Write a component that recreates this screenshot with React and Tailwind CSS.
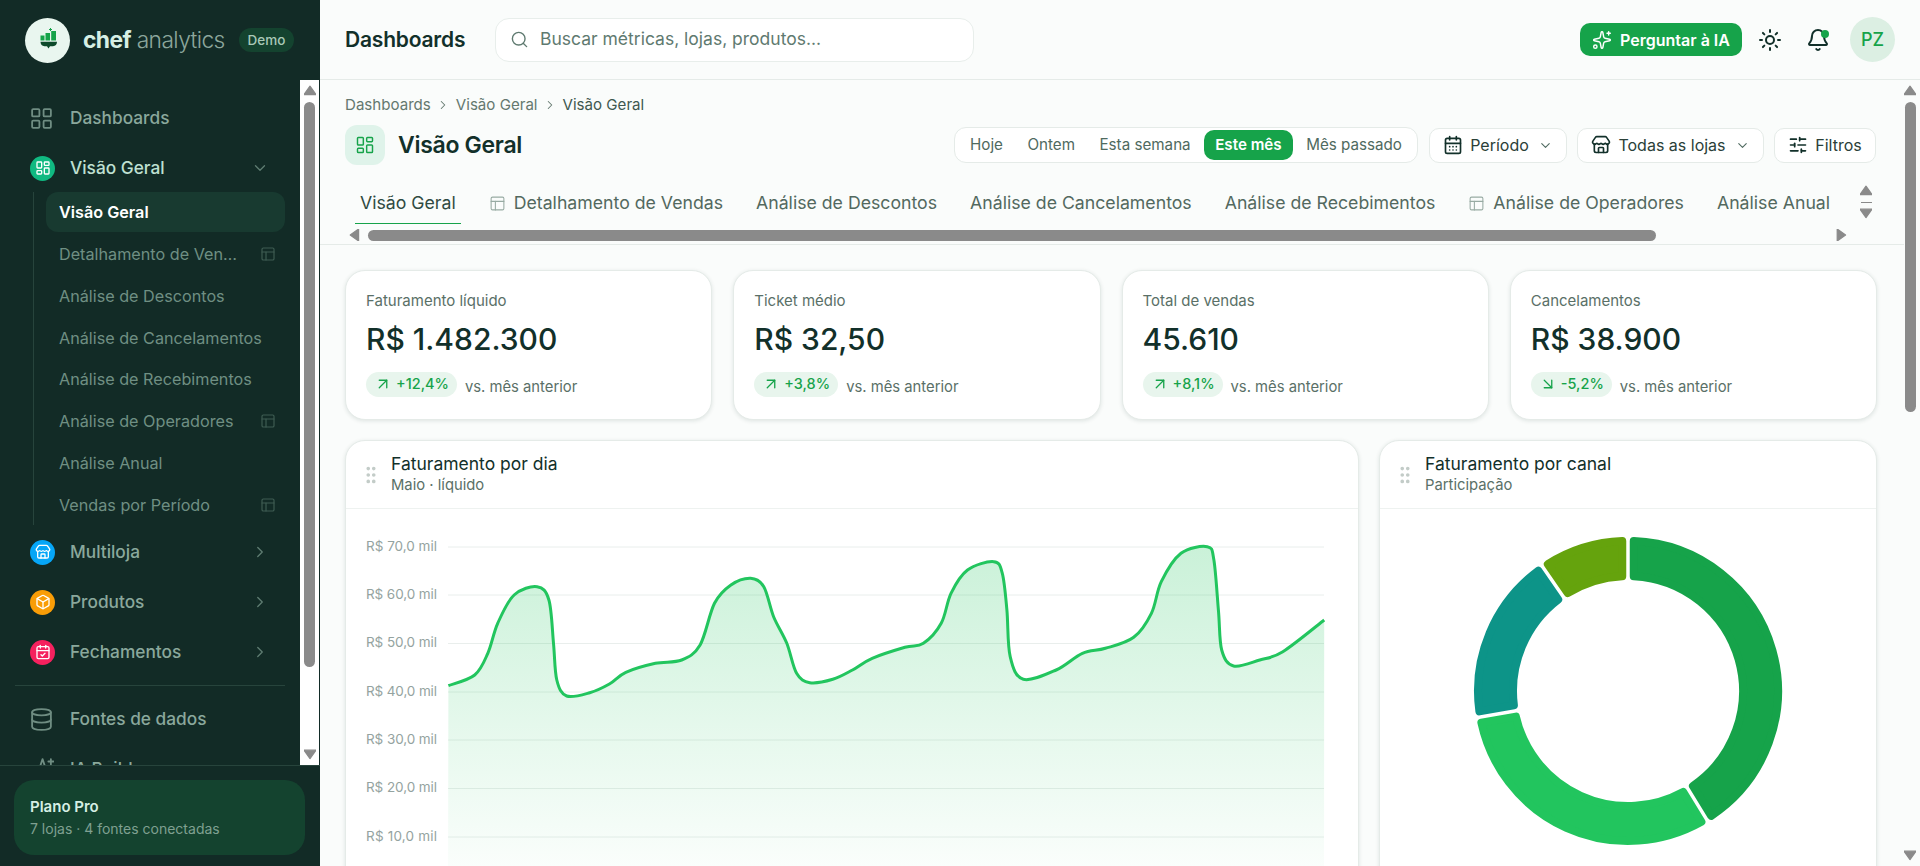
import {
  ArrowDownRight,
  ArrowUpRight,
  Bell,
  Box,
  CalendarCheck,
  CalendarDays,
  ChevronDown,
  ChevronRight,
  Database,
  GripVertical,
  LayoutDashboard,
  LayoutGrid,
  PanelsTopLeft,
  Search,
  SlidersHorizontal,
  Sparkles,
  Store,
  Sun,
} from 'lucide-react';

const subItems = [
  { label: 'Visão Geral', active: true },
  { label: 'Detalhamento de Vendas', table: true },
  { label: 'Análise de Descontos' },
  { label: 'Análise de Cancelamentos' },
  { label: 'Análise de Recebimentos' },
  { label: 'Análise de Operadores', table: true },
  { label: 'Análise Anual' },
  { label: 'Vendas por Período', table: true },
];

const groups = [
  { label: 'Multiloja', icon: Store, color: 'bg-[#06a6f7]' },
  { label: 'Produtos', icon: Box, color: 'bg-[#f99d07]' },
  { label: 'Fechamentos', icon: CalendarCheck, color: 'bg-[#f5215e]' },
];

const presets = ['Hoje', 'Ontem', 'Esta semana', 'Este mês', 'Mês passado'];

const tabs = [
  { label: 'Visão Geral', active: true },
  { label: 'Detalhamento de Vendas', table: true },
  { label: 'Análise de Descontos' },
  { label: 'Análise de Cancelamentos' },
  { label: 'Análise de Recebimentos' },
  { label: 'Análise de Operadores', table: true },
  { label: 'Análise Anual' },
];

const kpis = [
  { label: 'Faturamento líquido', value: 'R$ 1.482.300', delta: '+12,4%' },
  { label: 'Ticket médio', value: 'R$ 32,50', delta: '+3,8%' },
  { label: 'Total de vendas', value: '45.610', delta: '+8,1%' },
  { label: 'Cancelamentos', value: 'R$ 38.900', delta: '-5,2%', down: true },
];

const Arrow = ({ dir, className = '' }) => {
  const points = {
    up: '0,8 5,1 10,8',
    down: '0,1 10,1 5,8',
    left: '8,0 8,10 1,5',
    right: '1,0 1,10 8,5',
  };
  return (
    <svg viewBox="0 0 10 10" className={`w-[12px] h-[12px] shrink-0 ${className}`} fill="#8a8a8a" stroke="#8a8a8a" strokeWidth="1" strokeLinejoin="round">
      <polygon points={points[dir]} />
    </svg>
  );
};

const VScroll = ({ className = '', thumb }) => (
  <div className={`flex flex-col items-center shrink-0 ${className}`}>
    <div className="h-[22px] flex items-center justify-center"><Arrow dir="up" /></div>
    <div className={`w-[11px] rounded-full bg-[#8a8a8a] ${thumb}`} />
    <div className="flex-1" />
    <div className="h-[20px] flex items-center justify-center"><Arrow dir="down" /></div>
  </div>
);

const Logo = () => (
  <svg viewBox="0 0 24 24" className="w-[24px] h-[24px]">
    <rect x="4.500" y="7.500" width="4" height="5" fill="#16a34a" />
    <rect x="9.500" y="5" width="4.500" height="7.500" fill="#16a34a" />
    <rect x="15.200" y="3" width="4.800" height="9.500" fill="#16a34a" />
    <path d="M14.500 0v3M13 1.500h3" stroke="#16a34a" strokeWidth="1" />
    <path d="M4.500 13.800h16.500c0 2.500-1.500 4.400-4 4.400h-3l-1.500 2.300-1.500-2.300h-2.500c-2.500 0-4-1.900-4-4.400z" fill="#0e4a2b" />
  </svg>
);

const Sidebar = () => (
  <aside className="w-[320px] h-full shrink-0 flex flex-col bg-[#122b26]">
    <div className="h-[80px] shrink-0 flex items-center pl-[25px]">
      <div className="w-[45px] h-[45px] rounded-full bg-[#e9f6ef] flex items-center justify-center">
        <Logo />
      </div>
      <div className="ml-[13px] w-[143px] whitespace-nowrap text-[22.800px] tracking-[-0.6px]">
        <span className="font-bold text-[#d6efe4]">chef</span>
        <span className="font-light text-[#8ca69c]"> analytics</span>
      </div>
      <span className="ml-[13px] h-[24px] w-[55px] rounded-full bg-[#14432f] text-[#a9c9b8] text-[13.500px] font-medium flex items-center justify-center">Demo</span>
    </div>
    <div className="h-[685px] flex overflow-hidden">
      <nav className="w-[300px] shrink-0 overflow-hidden px-[15px] pt-[18px]">
        <div className="h-[40px] flex items-center gap-[16px] pl-[14px] text-[#8aa89c]">
          <LayoutGrid className="w-[25px] h-[25px] text-[#6f8d82]" strokeWidth={1.75} />
          <span className="text-[17.300px] font-medium">Dashboards</span>
        </div>
        <div className="h-[40px] mt-[10px] flex items-center pl-[15px] pr-[16px]">
          <span className="w-[25px] h-[25px] rounded-full bg-[#10b981] flex items-center justify-center">
            <LayoutDashboard className="w-[16px] h-[16px] text-white" strokeWidth={2} />
          </span>
          <span className="ml-[15px] flex-1 text-[17.300px] font-medium text-[#bfe0d2]">Visão Geral</span>
          <ChevronDown className="w-[18px] h-[18px] text-[#5f7d72]" strokeWidth={1.75} />
        </div>
        <ul className="ml-[18px] mt-[4px] border-l border-[#27443c] pl-[12px] flex flex-col gap-[1.900px]">
          {subItems.map((item) => (
            <li
              key={item.label}
              className={`h-[40px] rounded-[12px] flex items-center pl-[13px] pr-[9px] text-[16.200px] ${item.active ? 'bg-[#183a30] text-white font-semibold' : 'text-[#6f8f83]'}`}
            >
              <span className="flex-1 truncate">{item.label}</span>
              {item.table && <PanelsTopLeft className="w-[16px] h-[16px] ml-[15px] shrink-0 text-[#3f5d53]" strokeWidth={1.75} />}
            </li>
          ))}
        </ul>
        <div className="mt-[7px] flex flex-col gap-[10px]">
          {groups.map(({ label, icon: Icon, color }) => (
            <div key={label} className="h-[40px] flex items-center pl-[15px] pr-[16px]">
              <span className={`w-[25px] h-[25px] rounded-full flex items-center justify-center ${color}`}>
                <Icon className="w-[16px] h-[16px] text-white" strokeWidth={2} />
              </span>
              <span className="ml-[15px] flex-1 text-[17.300px] font-medium text-[#8aa89c]">{label}</span>
              <ChevronRight className="w-[18px] h-[18px] text-[#5f7d72]" strokeWidth={1.75} />
            </div>
          ))}
        </div>
        <div className="mt-[13px] border-t border-[#27443c]" />
        <div className="mt-[13px] h-[40px] flex items-center gap-[16px] pl-[14px] text-[#8aa89c]">
          <Database className="w-[25px] h-[25px] text-[#6f8d82]" strokeWidth={1.75} />
          <span className="text-[17.300px] font-medium">Fontes de dados</span>
        </div>
        <div className="mt-[10px] h-[40px] flex items-center gap-[16px] pl-[14px] text-[#8aa89c]">
          <svg viewBox="0 0 24 24" className="w-[25px] h-[25px] text-[#6f8d82]" fill="none" stroke="currentColor" strokeWidth="1.75" strokeLinecap="round" strokeLinejoin="round">
            <path d="M7 20 13 2l6 18M9 15h8M21 2v5M18.600 4.300h5" />
          </svg>
          <span className="text-[17.300px] font-medium">IA Builder</span>
        </div>
      </nav>
      <VScroll className="w-[19px] bg-white" thumb="h-[565px]" />
    </div>
    <div className="flex-1 border-t border-[#27443c] px-[14px] pt-[14px] pr-[15px]">
      <div className="h-[75px] rounded-[20px] bg-[#14432f] flex flex-col justify-center gap-[2px] pl-[16px]">
        <span className="text-[15px] leading-[20px] font-semibold text-[#d6efe4]">Plano Pro</span>
        <span className="text-[14px] leading-[20px] text-[#7fa091]">7 lojas · 4 fontes conectadas</span>
      </div>
    </div>
  </aside>
);

const Topbar = () => (
  <header className="h-[80px] shrink-0 flex items-center border-b border-[#e5ebe8] pl-[25px] pr-[25px]">
    <span className="w-[150px] text-[21px] font-semibold text-[#12302a] tracking-[-0.2px]">Dashboards</span>
    <div className="w-[479px] h-[44px] rounded-[14px] bg-white border border-[#e8eeeb] flex items-center pl-[14px] gap-[11px]">
      <Search className="w-[19px] h-[19px] text-[#5f7a70]" strokeWidth={1.75} />
      <span className="text-[17.500px] text-[#5f7a70]">Buscar métricas, lojas, produtos...</span>
    </div>
    <div className="flex-1" />
    <button className="w-[162px] h-[33px] rounded-[10px] bg-[#16a34a] text-white text-[16px] font-semibold flex items-center justify-center gap-[8px]">
      <Sparkles className="w-[20px] h-[20px]" strokeWidth={1.75} />
      Perguntar à IA
    </button>
    <Sun className="ml-[16px] w-[24px] h-[24px] text-[#12302a]" strokeWidth={2} />
    <div className="relative ml-[24px] w-[24px] h-[24px]">
      <Bell className="w-[24px] h-[24px] text-[#12302a]" strokeWidth={2} />
      <span className="absolute top-[2px] right-[1px] w-[8px] h-[8px] rounded-full bg-[#16a34a]" />
    </div>
    <div className="ml-[20px] w-[45px] h-[45px] rounded-full bg-[#dcefe3] text-[#16a34a] text-[18px] font-medium flex items-center justify-center">PZ</div>
  </header>
);

const PageHead = () => (
  <div className="shrink-0 border-b border-[#e5ebe8] pl-[25px] pr-[4px]">
    <div className="pr-[24px]">
      <nav className="pt-[9px] h-[41px] flex items-center text-[15.100px] text-[#64786f]">
        Dashboards
        <ChevronRight className="w-[14px] h-[14px] mx-[5.500px]" strokeWidth={1.75} />
        Visão Geral
        <ChevronRight className="w-[14px] h-[14px] mx-[5.500px]" strokeWidth={1.75} />
        <span className="text-[#3f5850]">Visão Geral</span>
      </nav>
      <div className="mt-[4px] flex items-center h-[40px]">
        <span className="w-[40px] h-[40px] rounded-[12px] bg-[#dff3ea] flex items-center justify-center">
          <LayoutDashboard className="w-[20px] h-[20px] text-[#16a34a]" strokeWidth={1.75} />
        </span>
        <h1 className="ml-[13px] text-[23px] font-semibold text-[#12302a] tracking-[-0.3px]">Visão Geral</h1>
        <div className="flex-1" />
        <div className="h-[36px] w-[464px] rounded-[12px] bg-white border border-[#e5ebe8] flex items-center justify-between px-[4px] text-[15.200px] text-[#4f6a60]">
          {presets.map((p) => (
            <span
              key={p}
              className={`h-[30px] flex items-center rounded-[10px] px-[11px] ${p === 'Este mês' ? 'bg-[#16a34a] text-white font-semibold' : ''}`}
            >
              {p}
            </span>
          ))}
        </div>
        <button className="ml-[11px] w-[138px] h-[35px] rounded-[10px] bg-white border border-[#e5ebe8] flex items-center justify-center gap-[7px] text-[16px] text-[#2a4038]">
          <CalendarDays className="w-[20px] h-[20px] text-[#12302a]" strokeWidth={2} />
          Período
          <ChevronDown className="w-[15px] h-[15px] ml-[2px] text-[#4f6a60]" strokeWidth={1.75} />
        </button>
        <button className="ml-[10px] w-[187px] h-[35px] rounded-[10px] bg-white border border-[#e5ebe8] flex items-center justify-center gap-[7px] text-[16px] text-[#2a4038]">
          <Store className="w-[20px] h-[20px] text-[#12302a]" strokeWidth={2} />
          Todas as lojas
          <ChevronDown className="w-[15px] h-[15px] ml-[2px] text-[#4f6a60]" strokeWidth={1.75} />
        </button>
        <button className="ml-[10px] w-[102px] h-[35px] rounded-[10px] bg-white border border-[#e5ebe8] flex items-center justify-center gap-[7px] text-[16px] text-[#2a4038]">
          <SlidersHorizontal className="w-[20px] h-[20px] text-[#12302a]" strokeWidth={2} />
          Filtros
        </button>
      </div>
    </div>
    <div className="mt-[15px] flex">
      <div className="flex-1 min-w-0">
        <div className="h-[44px] flex items-stretch pl-[10px] gap-[23px] overflow-hidden">
          {tabs.map((tab) => (
            <div
              key={tab.label}
              className={`shrink-0 flex items-center gap-[8px] text-[17.700px] pt-[3px] px-[5px] border-b ${tab.active ? 'border-[#16a34a] text-[#2f4a42]' : 'border-transparent text-[#53695f]'}`}
            >
              {tab.table && <PanelsTopLeft className="w-[17px] h-[17px] text-[#98aba3]" strokeWidth={1.5} />}
              {tab.label}
            </div>
          ))}
        </div>
        <div className="h-[20px] pt-[2px] pl-[4px] pr-[2px] flex items-center">
          <Arrow dir="left" />
          <div className="ml-[7px] w-[1288px] h-[11px] rounded-full bg-[#8a8a8a]" />
          <div className="flex-1" />
          <Arrow dir="right" />
        </div>
      </div>
      <div className="w-[50px] h-[44px] flex flex-col items-center justify-center gap-[5px] pr-[18px]">
        <Arrow dir="up" />
        <div className="w-[11px] h-[1px] bg-[#8a8a8a]" />
        <Arrow dir="down" />
      </div>
    </div>
  </div>
);

const KpiCard = ({ label, value, delta, down }) => {
  const DeltaIcon = down ? ArrowDownRight : ArrowUpRight;
  return (
    <div className="h-[150px] rounded-[20px] bg-white border border-[#e5ebe8] shadow-[0_1px_4px_rgba(18,48,42,0.12)] pl-[20px] pt-[20px]">
      <div className="text-[15px] leading-[20px] text-[#5a7067]">{label}</div>
      <div className="mt-[8px] text-[30px] leading-[40px] font-medium text-[#12302a]">{value}</div>
      <div className="mt-[11px] flex items-center gap-[8px]">
        <span className="h-[25px] rounded-full bg-[#e8f5ed] text-[#16a34a] text-[14.500px] font-medium flex items-center gap-[4px] px-[8px]">
          <DeltaIcon className="w-[18px] h-[18px]" strokeWidth={1.75} />
          {delta}
        </span>
        <span className="text-[14.800px] text-[#5a7067] pt-[6px]">vs. mês anterior</span>
      </div>
    </div>
  );
};

const rawLine = [
  [165, 527], [205, 495], [225, 430], [240, 340], [265, 255], [300, 230], [318, 270], [325, 400], [330, 510], [345, 558],
  [380, 548], [410, 522], [435, 487], [480, 460], [520, 450], [548, 405], [570, 280], [595, 225], [625, 205], [645, 230],
  [660, 320], [680, 400], [695, 490], [715, 518], [750, 508], [780, 480], [810, 445], [860, 412], [888, 400], [915, 340],
  [930, 250], [955, 180], [995, 155], [1008, 190], [1015, 300], [1020, 440], [1040, 508], [1090, 480], [1130, 430], [1165, 415],
  [1208, 382], [1235, 310], [1250, 215], [1280, 130], [1320, 110], [1330, 150], [1337, 300], [1342, 420], [1360, 468], [1400, 450],
  [1435, 425], [1498, 330],
];

// zoom coordinates to chart coordinates (svg origin = top-left of chart body)
const linePts = rawLine.map(([x, y]) => [340 + x / 1.522 - 346, 510 + y / 3 - 509]);

const smooth = (pts) => {
  let d = `M${pts[0][0].toFixed(1)} ${pts[0][1].toFixed(1)}`;
  for (let i = 0; i < pts.length - 1; i++) {
    const p0 = pts[i - 1] || pts[i];
    const p1 = pts[i];
    const p2 = pts[i + 1];
    const p3 = pts[i + 2] || p2;
    const c1 = [p1[0] + (p2[0] - p0[0]) / 6, p1[1] + (p2[1] - p0[1]) / 6];
    const c2 = [p2[0] - (p3[0] - p1[0]) / 6, p2[1] - (p3[1] - p1[1]) / 6];
    d += `C${c1[0].toFixed(1)} ${c1[1].toFixed(1)} ${c2[0].toFixed(1)} ${c2[1].toFixed(1)} ${p2[0].toFixed(1)} ${p2[1].toFixed(1)}`;
  }
  return d;
};

const linePath = smooth(linePts);
const gridY = [38, 86, 134.500, 183, 231, 279.500, 328];
const gridLabels = ['R$ 70,0 mil', 'R$ 60,0 mil', 'R$ 50,0 mil', 'R$ 40,0 mil', 'R$ 30,0 mil', 'R$ 20,0 mil', 'R$ 10,0 mil'];

const LineChart = () => (
  <svg width="1012" height="400" className="block">
    <defs>
      <linearGradient id="area" x1="0" y1="0" x2="0" y2="1">
        <stop offset="0" stopColor="#22c55e" stopOpacity="0.24" />
        <stop offset="0.89" stopColor="#22c55e" stopOpacity="0.02" />
      </linearGradient>
    </defs>
    {gridY.map((y, i) => (
      <g key={y}>
        <line x1="102" x2="978" y1={y} y2={y} stroke="#e9eeec" strokeWidth="1" />
        <text x="20" y={y + 3.500} fontSize="13.500" fill="#94a3a0" textLength="71" fontFamily="Inter, sans-serif">{gridLabels[i]}</text>
      </g>
    ))}
    <path d={`${linePath}L978 400L102 400Z`} fill="url(#area)" />
    <path d={linePath} fill="none" stroke="#22c55e" strokeWidth="3" strokeLinejoin="round" />
  </svg>
);

const sector = (from, to) => {
  const d = 5.75;
  const outer = 150;
  const inner = 115;
  const pt = (r, a) => {
    const t = (a * Math.PI) / 180;
    return `${(160 + r * Math.sin(t)).toFixed(2)} ${(160 - r * Math.cos(t)).toFixed(2)}`;
  };
  const off = (r) => (Math.asin(d / r) * 180) / Math.PI;
  const large = to - from > 180 ? 1 : 0;
  return `M${pt(outer, from + off(outer))}A${outer} ${outer} 0 ${large} 1 ${pt(outer, to - off(outer))}L${pt(inner, to - off(inner))}A${inner} ${inner} 0 ${large} 0 ${pt(inner, from + off(inner))}Z`;
};

const slices = [
  { from: 0, to: 148.500, color: '#16a34a' },
  { from: 148.500, to: 260, color: '#22c55e' },
  { from: 260, to: 325.500, color: '#0d9488' },
  { from: 325.500, to: 360, color: '#65a30d' },
];

const Donut = () => (
  <svg width="320" height="320" className="block shrink-0">
    {slices.map((s) => (
      <path key={s.color} d={sector(s.from, s.to)} fill={s.color} stroke={s.color} strokeWidth="8" strokeLinejoin="round" />
    ))}
  </svg>
);

const ChartCard = ({ title, subtitle, className = '', children }) => (
  <section className={`h-[500px] rounded-t-[20px] bg-white border border-[#e5ebe8] shadow-[0_1px_4px_rgba(18,48,42,0.12)] ${className}`}>
    <div className="h-[68px] flex items-center border-b border-[#eef2f0] pl-[14px]">
      <GripVertical className="w-[22px] h-[22px] text-[#c3ccc8]" strokeWidth={2} />
      <div className="ml-[9px] -mt-[1px]">
        <div className="text-[17.500px] leading-[22px] text-[#12302a]">{title}</div>
        <div className="text-[14.800px] leading-[20px] text-[#5a7067]">{subtitle}</div>
      </div>
    </div>
    {children}
  </section>
);

export default function App() {
  return (
    <div className="w-[1920px] h-[866px] overflow-hidden flex bg-[#fafcfb] font-['Inter',sans-serif]">
      <Sidebar />
      <main className="flex-1 min-w-0 h-full flex flex-col">
        <Topbar />
        <div className="flex-1 min-h-0 flex">
          <div className="flex-1 min-w-0 overflow-hidden">
            <PageHead />
            <div className="pl-[25px] pr-[27px] pt-[25px]">
              <div className="grid grid-cols-4 gap-[21px]">
                {kpis.map((k) => <KpiCard key={k.label} {...k} />)}
              </div>
              <div className="mt-[20px] flex gap-[20px]">
                <ChartCard title="Faturamento por dia" subtitle="Maio · líquido" className="w-[1014px] shrink-0">
                  <LineChart />
                </ChartCard>
                <ChartCard title="Faturamento por canal" subtitle="Participação" className="flex-1 min-w-0">
                  <div className="flex justify-center pt-[22px] pr-[1px]">
                    <Donut />
                  </div>
                </ChartCard>
              </div>
            </div>
          </div>
          <VScroll className="w-[16px] pr-[4px]" thumb="h-[310px]" />
        </div>
      </main>
    </div>
  );
}
